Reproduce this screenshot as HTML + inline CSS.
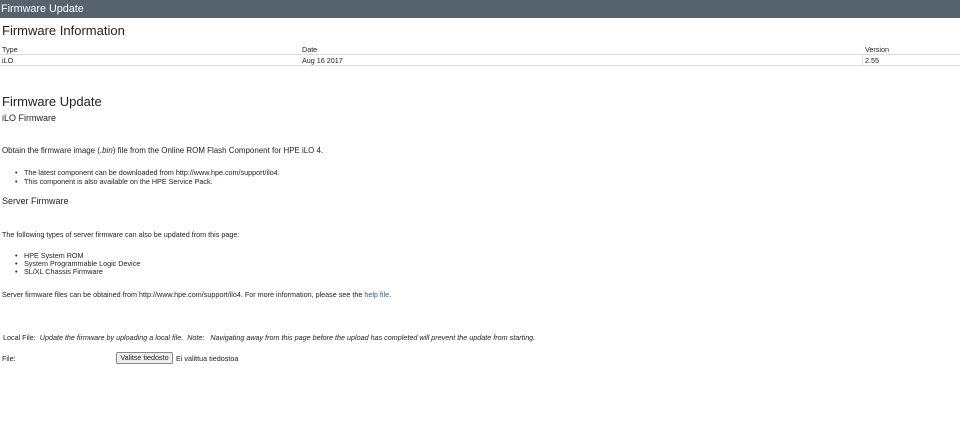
<!DOCTYPE html>
<html><head><meta charset="utf-8"><style>
body{margin:0;width:960px;height:437px;background:#fff;font-family:"Liberation Sans",Arial,sans-serif;color:#222;position:relative;overflow:hidden}
.a{position:absolute;white-space:nowrap;line-height:1}
.hdr{position:absolute;left:0;top:0;width:960px;height:18px;background:#56636f;color:#fff;font-size:10.8px;line-height:18px;padding-left:1px}
.s{font-size:7.2px}
.b::before{content:"•";position:absolute;left:-9px}
</style></head><body>
<div class="hdr">Firmware Update</div>
<div class="a" style="left:2px;top:24px;font-size:13px">Firmware Information</div>
<div class="a s" style="left:2px;top:46px">Type</div>
<div class="a s" style="left:302px;top:46px">Date</div>
<div class="a s" style="left:865px;top:46px">Version</div>
<div style="position:absolute;left:0;top:54px;width:960px;height:0;border-top:1px solid #ddd"></div>
<div style="position:absolute;left:0;top:65px;width:960px;height:0;border-top:1px solid #ddd"></div>
<div style="position:absolute;left:862px;top:54px;width:0;height:11px;border-left:1px solid #ddd"></div>
<div class="a s" style="left:2px;top:57px">iLO</div>
<div class="a s" style="left:302px;top:57px">Aug 16 2017</div>
<div class="a s" style="left:865px;top:57px">2.55</div>
<div class="a" style="left:2px;top:95px;font-size:13px">Firmware Update</div>
<div class="a" style="left:2px;top:114px;font-size:9px">iLO Firmware</div>
<div class="a s" style="left:2px;top:147px;font-size:7.95px">Obtain the firmware image (<i>.bin</i>) file from the Online ROM Flash Component for HPE iLO 4.</div>
<div class="a s b" style="left:24px;top:169px">The latest component can be downloaded from http://www.hpe.com/support/ilo4.</div>
<div class="a s b" style="left:24px;top:178px">This component is also available on the HPE Service Pack.</div>
<div class="a" style="left:2px;top:197px;font-size:9px">Server Firmware</div>
<div class="a s" style="left:2px;top:231px">The following types of server firmware can also be updated from this page:</div>
<div class="a s b" style="left:24px;top:252px">HPE System ROM</div>
<div class="a s b" style="left:24px;top:260px">System Programmable Logic Device</div>
<div class="a s b" style="left:24px;top:268px">SL/XL Chassis Firmware</div>
<div class="a s" style="left:2px;top:291px">Server firmware files can be obtained from http://www.hpe.com/support/ilo4. For more information, please see the <span style="color:#2a5db0">help file</span>.</div>
<div class="a s" style="left:3px;top:334px">Local File: &nbsp;<i>Update the firmware by uploading a local file. &nbsp;Note: &nbsp;&nbsp;Navigating away from this page before the upload has completed will prevent the update from starting.</i></div>
<div class="a s" style="left:2px;top:355px">File:</div>
<div class="a s" style="left:116px;top:352px;width:55px;height:10px;border:1px solid #888;background:#eee;border-radius:2px;text-align:center;line-height:10px">Valitse tiedosto</div>
<div class="a s" style="left:176px;top:355px">Ei valittua tiedostoa</div>
</body></html>
